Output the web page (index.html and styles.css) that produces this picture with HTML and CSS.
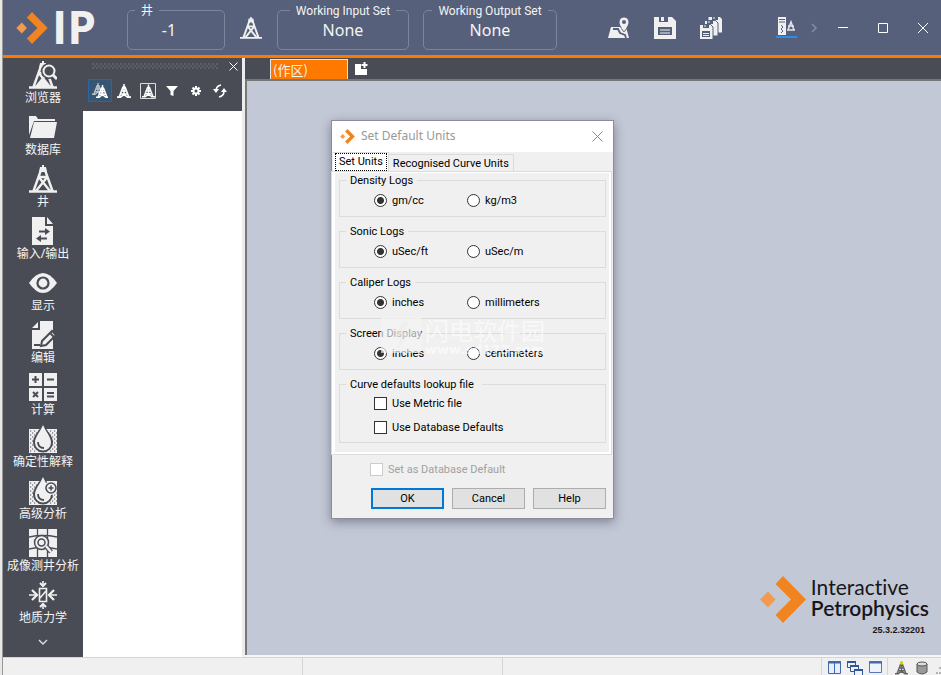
FILE: index.html
```html
<!DOCTYPE html>
<html lang="zh-CN">
<head>
<meta charset="utf-8">
<title>Interactive Petrophysics</title>
<link rel="stylesheet" href="styles.css">
</head>
<body>
<svg class="defs" aria-hidden="true">
  <symbol id="mark" viewBox="0 0 46 47"><path d="M8 15.5l7.500 8-7.500 8-8-8z" fill="#f39a4f"/><path d="M23 0l23 23.500L23 47l-7.500-8L31 23.500 15.500 8z" fill="#f08421"/></symbol>
  <symbol id="derrick" viewBox="0 0 28 28"><path d="M0 26.500h28M12 5L4.500 26M16 5l7.500 21M10.500 13L21 26M17.500 13L7 26M10.500 12h7" fill="none" stroke="#f0f0f0" stroke-width="2.400"/><path d="M13 0h2v2h2l1 5h-8l1-5h2z" fill="#f0f0f0"/></symbol>
  <symbol id="tower" viewBox="0 0 16 16"><path d="M8 0v13M7 3L2.500 15M9 3l4.500 12M6 4.500h4M4.500 8h7M3.500 11.500h9M8 12l-4 3M8 12l4 3M0 15h4.500M11.500 15H16" fill="none" stroke="currentColor" stroke-width="1.800"/></symbol>
  <symbol id="sand" viewBox="0 0 28 28"><path fill="#f0f0f0" d="M0 4h28v24H0z"/><path d="M1 6h28M1 10h28M1 14h28M1 18h28M1 22h28M1 26h28" stroke="#494c54" stroke-width="1" stroke-dasharray="1.200 2.800"/><path d="M3 8h28M3 12h28M3 16h28M3 20h28M3 24h28" stroke="#494c54" stroke-width="1" stroke-dasharray="1.200 2.800"/><path d="M14-1C10 6 4 11 4 17.500a10 10 0 0020 0C24 11 18 6 14-1z" fill="#494c54"/><path d="M14 0C11 7 6 12 6 17.500a8 8 0 0016 0C22 12 17 7 14 0z" fill="#f0f0f0"/><path d="M9 17q0 6 6 6" stroke="#494c54" stroke-width="1.800" fill="none"/></symbol>
</svg>
<div class="app">
  <header class="topbar">
    <div class="brand"><svg class="brand-mark"><use href="#mark"/></svg><span>IP</span></div>
    <fieldset class="setbox well"><legend>井</legend><output>-1</output></fieldset>
    <button class="plain derrick-btn" aria-label="井"><svg width="22" height="22"><use href="#derrick"/></svg></button>
    <fieldset class="setbox input-set"><legend>Working Input Set</legend><output>None</output></fieldset>
    <fieldset class="setbox output-set"><legend>Working Output Set</legend><output>None</output></fieldset>
    <nav class="tools">
      <button class="plain" aria-label="Map"><svg width="22" height="22" viewBox="0 0 22 22"><path d="M0 21L3 10h15l3 11z" fill="#f0f0f0"/><path d="M5 12h5l2 4 5 2 1 3" fill="none" stroke="#57607b" stroke-width="1.800"/><path d="M16 0a5 5 0 00-5 5c0 4 5 10 5 10s5-6 5-10a5 5 0 00-5-5z" fill="#f0f0f0" stroke="#57607b"/><circle cx="16" cy="5" r="2" fill="#57607b"/></svg></button>
      <button class="plain" aria-label="Save"><svg width="22" height="22" viewBox="0 0 22 22"><path d="M0 0h18l4 4v18H0z" fill="#f0f0f0"/><path d="M5 0h9v5H5z" fill="#57607b"/><path d="M7 0h3v4H7z" fill="#f0f0f0"/><path d="M4 10h14v8H4z" fill="#57607b"/><path d="M6 13h10M6 16h10" stroke="#f0f0f0"/></svg></button>
      <button class="plain" aria-label="Save all"><svg width="22" height="22" viewBox="0 0 22 22"><g fill="#f0f0f0" stroke="#57607b"><path d="M8-.5h12l2.500 2.500v14H8z"/><path d="M4.500 3.500h11L18 6v13H4.500z"/><path d="M-.5 7.500h11L13 10v12.500H-.5z"/></g><path d="M12 0v3h6V0M7 4v3h6V4M3 8v3h6V8M2 14h8v6H2z" fill="#57607b"/><path d="M3 16.500h6M3 18.500h6M5 8v2M9 4v2M14 0v2" stroke="#f0f0f0"/></svg></button>
    </nav>
    <button class="plain units-btn" aria-label="Units"><svg width="21" height="22" viewBox="0 0 21 22"><path d="M2 0h8v18H2z" fill="#f0f0f0"/><path d="M3 2.500h6M3 5h6M5 8l2 2-2 2 2 2-2 2" stroke="#57607b" fill="none"/><path d="M12 13l3-8 3 8M12 9h6M11 13h8" stroke="#e5e5ea" stroke-width="1.500" fill="none"/><path d="M0 19h21v2H0z" fill="#2f8be6"/></svg></button>
    <button class="plain more" aria-label="More"><svg width="7" height="10" viewBox="0 0 7 10"><path d="M1 1l4 4-4 4" fill="none" stroke="#858da3" stroke-width="1.500"/></svg></button>
    <div class="window-buttons">
      <button class="plain" aria-label="Minimize"><svg width="10" height="10"><path d="M0 4.500h10" stroke="#fff"/></svg></button>
      <button class="plain" aria-label="Maximize"><svg width="10" height="10"><path d="M.5.500h9v9h-9z" fill="none" stroke="#fff"/></svg></button>
      <button class="plain" aria-label="Close"><svg width="10" height="10"><path d="M0 0l10 10M10 0L0 10" stroke="#fff"/></svg></button>
    </div>
  </header>
  <div class="main">
    <nav class="sidebar">
      <a href="#"><svg viewBox="0 0 28 28"><use href="#derrick"/><path d="M7 26l7-9 7 9z" fill="#f0f0f0"/><circle cx="20" cy="10" r="8" fill="#494c54"/><circle cx="20" cy="10" r="5.500" fill="none" stroke="#f0f0f0" stroke-width="2"/><path d="M24 14l4 4" stroke="#f0f0f0" stroke-width="3"/></svg>浏览器</a>
      <a href="#"><svg viewBox="0 0 28 28"><path d="M0 3h7l2 3h17v2H5L0 22z" fill="#f0f0f0"/><path d="M5 9h23l-3 16H1z" fill="#f0f0f0"/></svg>数据库</a>
      <a href="#"><svg viewBox="0 0 28 28"><use href="#derrick"/></svg>井</a>
      <a href="#"><svg viewBox="0 0 28 28"><path d="M3 0h13v9h8v19H3zM18 0l6 7h-6z" fill="#f0f0f0"/><path d="M10 14.500h8M10 21.500h8" stroke="#494c54" stroke-width="2"/><path d="M16 11l5 3.500-5 3.500M12 18l-5 3.500 5 3.500" fill="#494c54"/></svg>输入/输出</a>
      <a href="#"><svg viewBox="0 0 28 28"><path d="M0 14Q14-6 28 14 14 34 0 14z" fill="#f0f0f0"/><circle cx="14" cy="14" r="5.500" fill="#f0f0f0" stroke="#494c54" stroke-width="2.200"/></svg>显示</a>
      <a href="#"><svg viewBox="0 0 28 28"><path d="M11 0h13v28H3V9h8zM9 1v6H3z" fill="#f0f0f0"/><path d="M5 24h6" stroke="#494c54" stroke-width="2"/><path d="M13 20l10-10 4 4-10 10-5 1z" fill="#f0f0f0" stroke="#494c54" stroke-width="2"/><path d="M21 12l4 4" stroke="#494c54" stroke-width="2"/></svg>编辑</a>
      <a href="#"><svg viewBox="0 0 28 28"><path d="M0 0h13v13H0zM15 0h13v13H15zM0 15h13v13H0zM15 15h13v13H15z" fill="#f0f0f0"/><path d="M3 6.500h7M6.500 3v7M18 6.500h7M4 19l5 5M9 19l-5 5M18 20h7M18 23.500h7" stroke="#494c54" stroke-width="2"/></svg>计算</a>
      <a href="#"><svg viewBox="0 0 28 28"><use href="#sand"/></svg>确定性解释</a>
      <a href="#"><svg viewBox="0 0 28 28"><use href="#sand"/><circle cx="22" cy="11" r="7" fill="#f0f0f0"/><circle cx="22" cy="11" r="5" fill="none" stroke="#494c54" stroke-width="1.600"/><path d="M19.500 11h5M22 8.500v5" stroke="#494c54" stroke-width="1.600"/></svg>高级分析</a>
      <a href="#"><svg viewBox="0 0 28 28"><path fill="#f0f0f0" d="M0 0h28v28H0z"/><path d="M8.500 0v28M18.500 0v28M0 8q14-3 28 0M0 20q14-3 28 0" stroke="#494c54" fill="none" stroke-width="1.300"/><circle cx="12.500" cy="13.500" r="7" fill="#f0f0f0" stroke="#494c54" stroke-width="1.500"/><circle cx="12.500" cy="13.500" r="3.500" fill="none" stroke="#494c54" stroke-width="1.500"/><path d="M17 17l5 6" stroke="#494c54" stroke-width="5"/><path d="M17 17l5 6" stroke="#f0f0f0" stroke-width="2.500"/></svg>成像测井分析</a>
      <a href="#"><svg viewBox="0 0 28 28"><path d="M10.500 7.500h7v13h-7zM11 17l6-7M0 14h7M28 14h-7M14 0v4M14 28v-4" fill="none" stroke="#f0f0f0" stroke-width="1.600"/><path d="M3 9l5 5-5 5M25 9l-5 5 5 5" fill="none" stroke="#f0f0f0" stroke-width="2.300"/><path d="M11 2l3 3 3-3M11 26l3-3 3 3" fill="none" stroke="#f0f0f0" stroke-width="2"/></svg>地质力学</a>
      <button class="plain scroll-more" aria-label="More"><svg width="10" height="6"><path d="M1 1l4 4 4-4" fill="none" stroke="#e0e0e0" stroke-width="1.400"/></svg></button>
    </nav>
    <aside class="explorer">
      <div class="explorer-head">
        <div class="grip-row"><span class="grip"></span><button class="plain" aria-label="Close panel"><svg width="9" height="9"><path d="M.5.500l8 8M8.500.500l-8 8" stroke="#fff"/></svg></button></div>
        <div class="explorer-tools">
          <button class="plain selected" aria-label="All wells"><svg width="16" height="16" viewBox="0 0 16 16"><svg width="12" height="12" x="0" y="0" color="#b9c2c9"><use href="#tower"/></svg><svg width="13" height="15" x="4" y="1" color="#fff"><use href="#tower"/></svg></svg></button>
          <button class="plain" aria-label="Well"><svg width="14" height="14"><use href="#tower"/></svg></button>
          <button class="plain" aria-label="Current well"><svg width="16" height="16"><path d="M.5.500h15v15H.5z" fill="none" stroke="#ddd"/><svg x="2" y="1" width="13" height="14"><use href="#tower"/></svg></svg></button>
          <button class="plain" aria-label="Filter"><svg width="12" height="12"><path d="M0 1h12L7.500 6v5l-3-1V6z" fill="#fff"/></svg></button>
          <button class="plain" aria-label="Settings"><svg width="12" height="12"><path d="M6 1v10M1 6h10M2.500 2.500l7 7M9.500 2.500l-7 7" stroke="#fff" stroke-width="2"/><circle cx="6" cy="6" r="3.500" fill="#fff"/><circle cx="6" cy="6" r="1.500" fill="#494c54"/></svg></button>
          <button class="plain" aria-label="Refresh"><svg width="14" height="14"><path d="M8 1Q3 2 3 7M6 13q5-1 5-6" fill="none" stroke="#fff" stroke-width="1.600"/><path d="M0 5h6L3 9zM8 8h6l-3-4z" fill="#fff"/></svg></button>
        </div>
      </div>
    </aside>
    <section class="workspace">
      <div class="tabstrip"><button class="work-tab">(作区)</button><button class="plain" aria-label="New tab"><svg width="13" height="13"><path d="M0 2h6v5h6v6H0z" fill="#fff"/><path d="M9.500 0v6M6.500 3h6" stroke="#fff" stroke-width="2"/></svg></button></div>
      <div class="canvas">
        <div class="product">
          <svg class="product-mark"><use href="#mark"/></svg>
          <div class="product-name"><span>Interactive</span><b>Petrophysics</b><small>25.3.2.32201</small></div>
        </div>
      </div>
    </section>
  </div>
  <footer class="status">
    <span class="cell first"></span><span class="cell second"></span><span class="cell rest"></span>
    <span class="view-icons">
      <svg width="13" height="13"><path d="M.5.500h12v12H.5z" fill="#e7effb" stroke="#4169ad"/><path d="M0 1.500h13" stroke="#4169ad" stroke-width="2"/><path d="M6.500 1v12" stroke="#4169ad"/></svg>
      <svg width="16" height="16"><g fill="#edf2fb" stroke="#315795"><path d="M.5.500h8v6h-8z"/><path d="M3.500 4.500h8v6h-8z"/><path d="M7.500 8.500h8v6h-8z"/><path d="M0 1h9M3 5h9M7 9h9" stroke-width="2"/></g></svg>
      <svg width="13" height="13"><path d="M.5.500h12v11H.5z" fill="#edf2fb" stroke="#5579b8"/><path d="M0 1.500h13" stroke="#4169ad" stroke-width="2"/></svg>
    </span>
    <span class="state-icons">
      <svg width="13" height="14" color="#646464"><use href="#tower"/><circle cx="6.500" cy="2" r="1.700" fill="#d7d600"/></svg>
      <svg width="12" height="14"><path d="M1 3v8q5 4 10 0V3z" fill="#999" stroke="#555"/><ellipse cx="6" cy="3" rx="5" ry="2" fill="#ddd" stroke="#555"/></svg>
      <svg class="resize" width="5" height="8"><path d="M3 0h2v2H3zM0 5h2v2H0zM3 5h2v2H3z" fill="#b5b5b5"/></svg>
    </span>
  </footer>
</div>

<form class="dialog" role="dialog" aria-labelledby="dialog-title">
  <div class="dialog-title"><svg class="dialog-mark"><use href="#mark"/></svg><span id="dialog-title">Set Default Units</span><button type="button" class="plain" aria-label="Close"><svg width="11" height="11"><path d="M.5.500l10 10M10.500.500l-10 10" stroke="#888"/></svg></button></div>
  <div class="tabs" role="tablist"><button type="button" role="tab" aria-selected="true"><span>Set Units</span></button><button type="button" role="tab" aria-selected="false">Recognised Curve Units</button></div>
  <div class="panel">
    <fieldset><legend>Density Logs</legend><div class="choices"><label><input type="radio" name="density" checked>gm/cc</label><label><input type="radio" name="density">kg/m3</label></div></fieldset>
    <fieldset><legend>Sonic Logs</legend><div class="choices"><label><input type="radio" name="sonic" checked>uSec/ft</label><label><input type="radio" name="sonic">uSec/m</label></div></fieldset>
    <fieldset><legend>Caliper Logs</legend><div class="choices"><label><input type="radio" name="caliper" checked>inches</label><label><input type="radio" name="caliper">millimeters</label></div></fieldset>
    <fieldset><legend>Screen Display</legend><div class="choices"><label><input type="radio" name="screen" checked>inches</label><label><input type="radio" name="screen">centimeters</label></div></fieldset>
    <fieldset><legend class="wide">Curve defaults lookup file</legend><div class="checks"><label><input type="checkbox">Use Metric file</label><label><input type="checkbox">Use Database Defaults</label></div></fieldset>
  </div>
  <label class="db-default"><input type="checkbox" disabled>Set as Database Default</label>
  <div class="actions"><button type="button" class="primary">OK</button><button type="button">Cancel</button><button type="button">Help</button></div>
  <div class="watermark"><svg width="40" height="36"><path d="M0 0h40v36H0z" fill="#f4f4f4" fill-opacity=".65"/><path d="M22 4L13 20h7l-4 13 13-17h-7l6-12z" fill="#e9e9e9" fill-opacity=".4"/></svg><div><span>闪电软件园</span><small>www.sd173.com</small></div></div>
</form>
</body>
</html>
```
FILE: styles.css
```css
* { box-sizing: border-box; }
body { margin: 0; font-family: "Noto Sans", "Noto Sans CJK SC", sans-serif; }
svg { display: block; flex: none; }
fieldset { min-width: 0; margin: 0; }
.defs { position: absolute; width: 0; height: 0; }
.plain { display: flex; align-items: center; justify-content: center; padding: 0; border: 0; background: none; color: #fff; }
.app { display: flex; flex-direction: column; height: 100vh; overflow: hidden; padding-left: 3px; background: linear-gradient(to right, #e8e8e8 2px, #999 2px, #999 3px, #f0f0f0 3px); }

.topbar { display: flex; flex: none; height: 58px; background: #57607b; border-bottom: 3px solid #ff7800; color: #f4f4f4; }
.brand { display: flex; align-items: center; gap: 4px; width: 124px; padding-left: 13px; font: bold 46px/52px "Open Sans", sans-serif; color: #f0f0f0; }
.brand span { padding-bottom: 3px; }
.brand-mark { width: 32px; height: 32px; }
.setbox { height: 48px; margin-top: 2px; padding: 0; border: 1px solid #7d859b; border-radius: 5px; text-align: center; }
.setbox legend { margin: 0 auto; padding: 1px 6px 0; font: 12px/16px Roboto, "Noto Sans CJK SC", sans-serif; white-space: nowrap; }
.setbox output { display: block; font-size: 16px; line-height: 22px; }
.well { width: 98px; }
.well legend { margin-left: 7px; }
.well output { padding-right: 14px; }
.input-set { width: 132px; }
.output-set { width: 134px; margin-left: 14px; }
.derrick-btn { width: 52px; }
.tools { display: flex; gap: 24px; margin-left: auto; }
.units-btn { margin-left: 54px; }
.more { width: 34px; }
.window-buttons { display: flex; gap: 30px; padding: 0 13px 0 7px; }

.main { display: flex; flex: 1; min-height: 0; }
.sidebar { display: flex; flex: none; flex-direction: column; gap: 6px; width: 80px; padding-top: 3px; background: #494c54; }
.sidebar a { display: flex; flex-direction: column; align-items: center; color: #f4f4f4; font-size: 12px; line-height: 18px; text-decoration: none; white-space: nowrap; }
.sidebar a svg { width: 28px; height: 28px; }
.scroll-more { height: 18px; }
.explorer { flex: none; width: 159px; background: #fff; }
.explorer-head { height: 53px; background: #494c54; }
.grip-row { display: flex; align-items: center; justify-content: space-between; height: 16px; padding: 0 4px 0 9px; }
.grip { width: 126px; height: 6px; background: radial-gradient(circle at 1px 1px, #5c5f68 1px, transparent 1px) 0 0 / 4px 4px, radial-gradient(circle at 1px 1px, #5c5f68 1px, transparent 1px) 2px 2px / 4px 4px; }
.explorer-tools { display: flex; margin: 5px 0 0 5px; }
.explorer-tools button { width: 24px; height: 23px; }
.explorer-tools .selected { border: 1px solid #2d669a; background: #385673; }
.workspace { display: flex; flex: 1; flex-direction: column; min-width: 0; border-left: 3px solid #ececec; border-bottom: 2px solid #f5f5f5; }
.tabstrip { display: flex; height: 21px; padding-left: 25px; background: #494c54; }
.work-tab { width: 78px; margin-top: 1px; padding: 0 2px; border: 1px solid #e5e5e5; border-bottom: 0; background: #ff7800; color: #f4f4f4; font: 13px/18px "Noto Sans CJK SC", sans-serif; text-align: left; }
.tabstrip .plain { width: 26px; }
.canvas { display: flex; flex: 1; align-items: flex-end; justify-content: flex-end; padding: 0 12px 13px 0; border: 2px solid #777; border-width: 2px 0 0 2px; background: #c3c8d6; }
.product { display: flex; gap: 5px; color: #161719; }
.product-mark { width: 46px; height: 47px; }
.product-name { display: flex; flex-direction: column; font: 21px/21px Lato, sans-serif; font-variant-ligatures: none; }
.product-name b { font-weight: 600; }
.product-name small { align-self: flex-end; margin-right: 4px; font: bold 9px/24px "Liberation Sans", sans-serif; }

.status { display: flex; flex: none; height: 18px; border-top: 1px solid #d5d5d5; background: #f0f0f0; }
.cell { border-right: 1px solid #d5d5d5; }
.first { width: 300px; }
.second { width: 200px; }
.rest { flex: 1; }
.view-icons, .state-icons { display: flex; gap: 6px; padding-top: 3px; }
.view-icons { width: 66px; padding-left: 6px; border-right: 1px solid #d5d5d5; }
.state-icons { gap: 8px; width: 53px; padding-left: 7px; }
.resize { align-self: flex-end; }

.dialog { position: absolute; left: 331px; top: 120px; width: 283px; border: 1px solid #8a8d97; background: #f0f0f0; box-shadow: 0 3px 10px rgba(40, 45, 70, .45); color: #000; font: 11px/14px Roboto, sans-serif; }
.dialog-title { display: flex; align-items: center; gap: 6px; height: 31px; padding: 0 10px 1px 8px; background: #fff; color: #999; font: 12px/16px "Noto Sans", sans-serif; }
.dialog-title button { margin-left: auto; }
.dialog-mark { width: 15px; height: 15px; }
.tabs { display: flex; align-items: flex-end; height: 20px; padding-left: 1px; }
.tabs button { height: 18px; padding: 0 4px; border: 1px solid #dcdcdc; border-left: 0; border-bottom: 0; background: #f0f0f0; color: #000; font: inherit; white-space: nowrap; }
.tabs button[aria-selected="true"] { height: 20px; padding: 0 1px 1px 2px; background: #fff; }
.tabs button[aria-selected="true"] span { display: block; padding: 1px 3px; border: 1px dotted #000; }
.panel { display: flex; flex-direction: column; gap: 7px; margin-right: 2px; padding: 0 3px 9px 4px; border: solid #fff; border-width: 1px 2px 2px 3px; outline: 1px solid #dcdcdc; }
.panel fieldset { height: 44px; padding: 6px 0 0 34px; border: 1px solid #dcdcdc; }
.panel fieldset:last-child { height: 66px; padding-top: 5px; }
.panel legend { margin-left: -28px; padding: 1px 4px 0; line-height: 13px; }
.panel legend.wide { padding-right: 8px; }
.choices { display: grid; grid-template-columns: 93px 1fr; }
.checks { display: grid; gap: 8px; }
label { display: flex; align-items: center; gap: 5px; height: 16px; line-height: 16px; white-space: nowrap; }
input { flex: none; appearance: none; width: 13px; height: 13px; margin: 0 0 1px; border: 1px solid #333; background: #fff; }
input[type="radio"] { border-radius: 50%; }
input[type="radio"]:checked { background: radial-gradient(circle, #333 3px, #fff 4px); }
.db-default { margin: 8px 0 0 38px; color: #a0a0a0; }
.db-default input { border-color: #ccc; }
.actions { display: flex; justify-content: flex-end; gap: 8px; padding: 10px 7px 9px; }
.actions button { width: 73px; height: 21px; padding: 0; border: 1px solid #adadad; background: #e1e1e1; color: #000; font: inherit; }
.actions .primary { border: 2px solid #0078d7; }
.watermark { position: absolute; left: 49px; top: 196px; display: flex; gap: 4px; color: rgba(255, 255, 255, .6); pointer-events: none; }
.watermark span { display: block; font: 24px/26px "Noto Sans CJK SC", sans-serif; }
.watermark small { display: block; font: bold 13px/14px "DejaVu Sans", sans-serif; }
```
